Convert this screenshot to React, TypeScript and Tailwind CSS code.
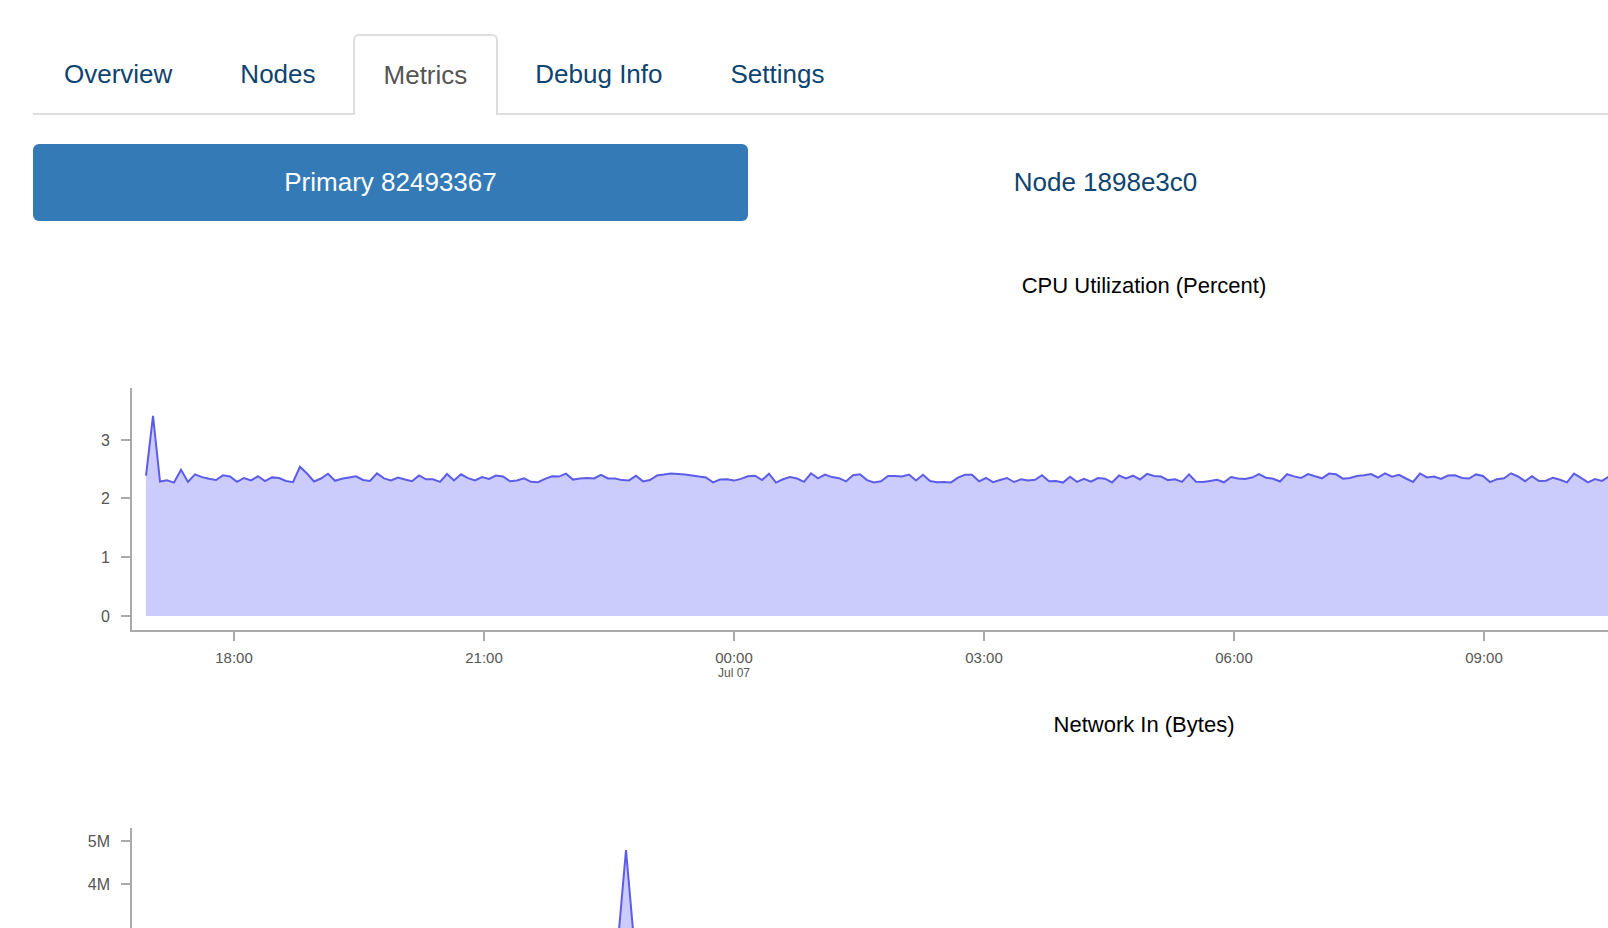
import React from "react";

function rand(seed: number) {
  let s = seed;
  return () => {
    s = (s * 9301 + 49297) % 233280;
    return s / 233280;
  };
}

const spikes: Record<number, number> = {
  146: 2.4, 153: 3.42, 166: 3.33, 174: 2.28, 181: 2.5, 626: 3.5, 633: 2.16, 640: 2.55,
  300: 2.55, 501: 2.56, 598: 2.58, 1313: 2.6, 1376: 2.62, 1425: 2.2, 1418: 2.48, 1432: 2.52,
};

function cpuPoints() {
  const r = rand(7);
  const pts: [number, number][] = [];
  for (let x = 146; x <= 1610; x += 7) {
    let v = 2.36 + (r() - 0.5) * 0.16;
    if (spikes[x] !== undefined) v = spikes[x];
    pts.push([x, 616 - 58.5 * v]);
  }
  return pts;
}

const tabs = ["Overview", "Nodes", "Metrics", "Debug Info", "Settings"];

export default function App() {
  const pts = cpuPoints();
  const line = pts.map((p, i) => `${i ? "L" : "M"}${p[0]},${p[1].toFixed(1)}`).join(" ");
  const area = `${line} L${pts[pts.length - 1][0]},616 L146,616 Z`;
  const yTicks = [[3, 440], [2, 498], [1, 557], [0, 616]];
  const xTicks = [["18:00", 234], ["21:00", 484], ["00:00", 734], ["03:00", 984], ["06:00", 1234], ["09:00", 1484]];
  return (
    <div className="w-[1608px] h-[928px] overflow-hidden bg-white" style={{ fontFamily: '"Liberation Sans", Arial, sans-serif' }}>
      <div className="pt-[34px] pl-[33px]">
        <div className="flex gap-[6px] border-b-2 border-[#dddddd] h-[81px]">
          {tabs.map((t) =>
            t === "Metrics" ? (
              <div key={t} className="h-[81px] -mb-[2px] px-[29px] flex items-center text-[26px] text-[#555555] bg-white border-2 border-b-0 border-[#dddddd] rounded-t-[6px]">
                {t}
              </div>
            ) : (
              <div key={t} className="h-[80px] px-[31px] flex items-center text-[26px] text-[#0e4470]">
                {t}
              </div>
            )
          )}
        </div>
        <div className="flex mt-[29px]">
          <div className="w-[715px] h-[77px] rounded-[6px] bg-[#337ab7] text-white text-[26px] flex items-center justify-center">Primary 82493367</div>
          <div className="w-[715px] h-[77px] text-[#0e4470] text-[26px] flex items-center justify-center">Node 1898e3c0</div>
        </div>
      </div>
      <svg width="1608" height="707" viewBox="0 221 1608 707" className="block" style={{ fontFamily: '"Liberation Sans", Arial, sans-serif' }}>
        <text x="1144" y="293" textAnchor="middle" fontSize="22" fill="#000">CPU Utilization (Percent)</text>
        <path d={area} fill="#ccccfc" />
        <path d={line} fill="none" stroke="#5c5ce8" strokeWidth="2" />
        <line x1="131" y1="388" x2="131" y2="632" stroke="#aaa" strokeWidth="2" />
        <line x1="130" y1="631" x2="1608" y2="631" stroke="#aaa" strokeWidth="2" />
        {yTicks.map(([v, y]) => (
          <g key={v}>
            <line x1="121" y1={y} x2="131" y2={y} stroke="#aaa" strokeWidth="2" />
            <text x="110" y={y + 6} textAnchor="end" fontSize="16" fill="#555">{v}</text>
          </g>
        ))}
        {xTicks.map(([l, x]) => (
          <g key={l as string}>
            <line x1={x} y1="631" x2={x} y2="641" stroke="#aaa" strokeWidth="2" />
            <text x={x} y="663" textAnchor="middle" fontSize="15" fill="#555">{l}</text>
          </g>
        ))}
        <text x="734" y="677" textAnchor="middle" fontSize="12" fill="#555">Jul 07</text>
        <text x="1144" y="732" textAnchor="middle" fontSize="22" fill="#000">Network In (Bytes)</text>
        <path d="M619,930 L626,850 L633,930 Z" fill="#ccccfc" />
        <path d="M619,930 L626,850 L633,930" fill="none" stroke="#5c5ce8" strokeWidth="2" />
        <line x1="131" y1="828" x2="131" y2="928" stroke="#aaa" strokeWidth="2" />
        {[["5M", 841], ["4M", 884]].map(([l, y]) => (
          <g key={l as string}>
            <line x1="121" y1={y} x2="131" y2={y} stroke="#aaa" strokeWidth="2" />
            <text x="110" y={(y as number) + 6} textAnchor="end" fontSize="16" fill="#555">{l}</text>
          </g>
        ))}
      </svg>
    </div>
  );
}
